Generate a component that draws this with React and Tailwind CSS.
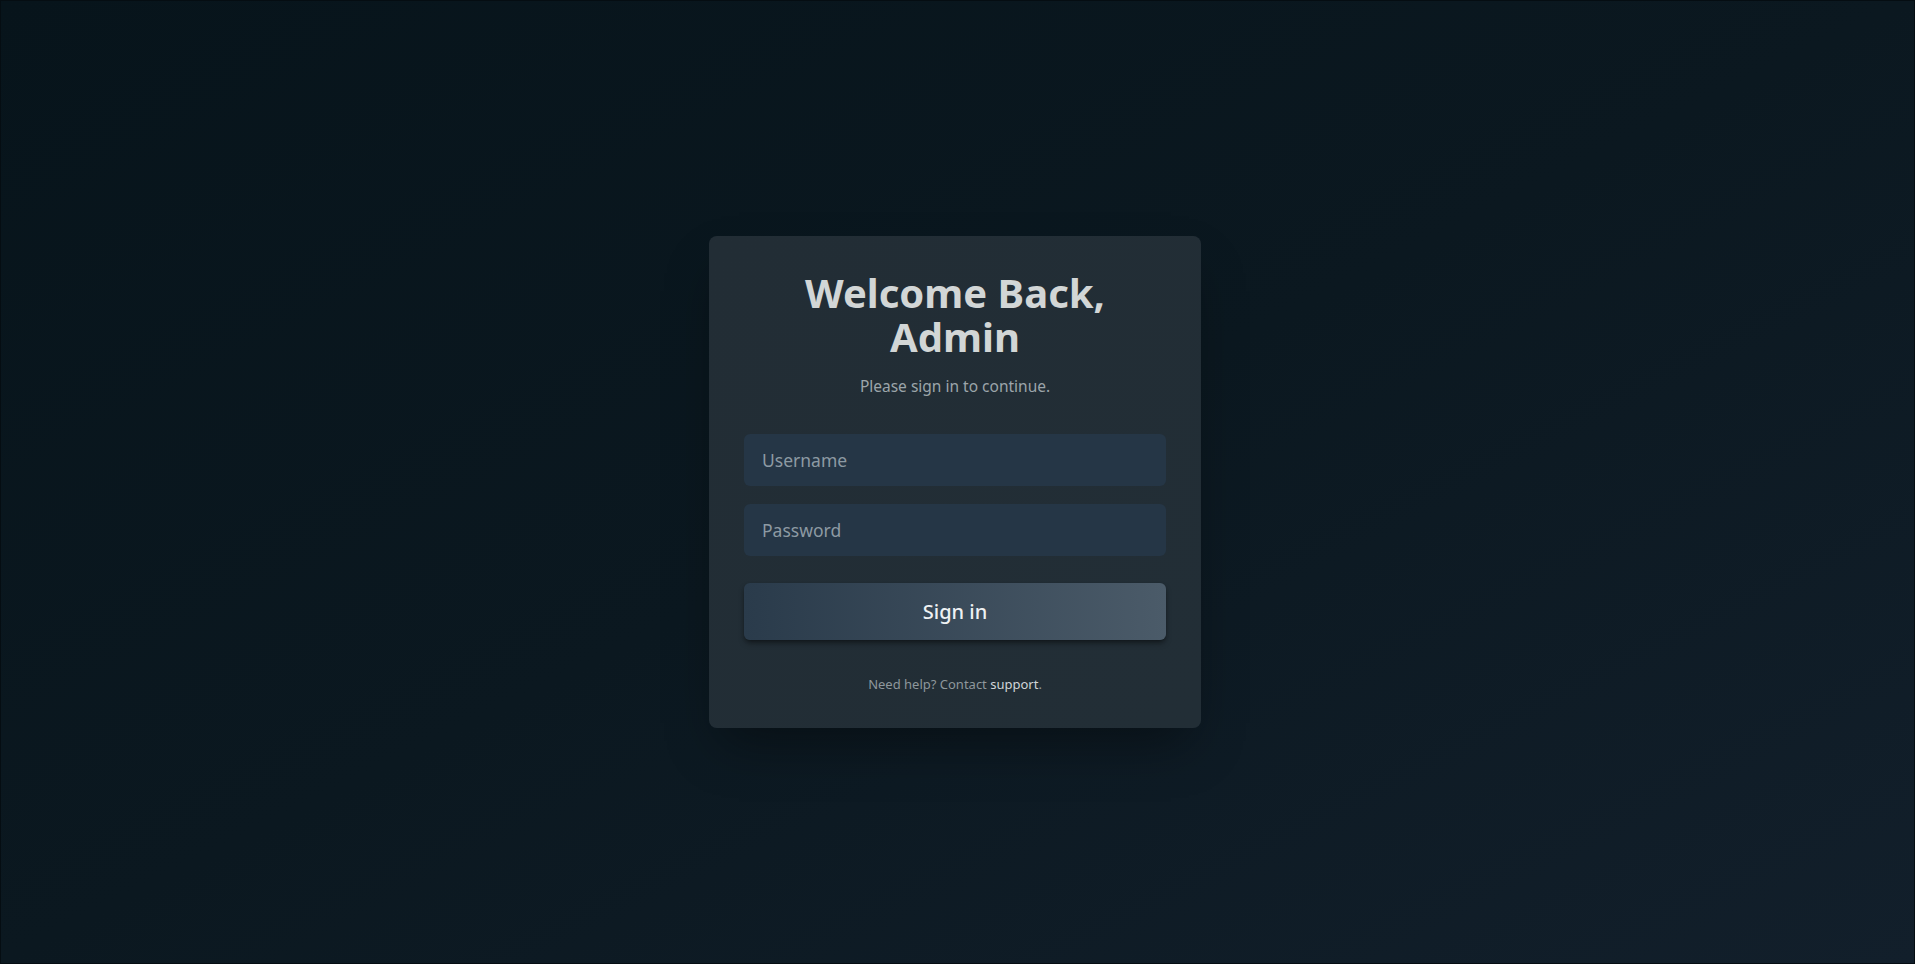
const App = () => {
  return (
    <main
      className="w-full h-screen flex items-center justify-center pr-[5px] border border-[#050d12] bg-gradient-to-br from-[#07141b] via-[#0b1820] to-[#121f2b]"
      style={{ fontFamily: '"Noto Sans", "Open Sans", sans-serif' }}
    >
      <section className="w-[492px] rounded-lg bg-gradient-to-br from-[#222d35] to-[#222e36] shadow-2xl shadow-black/40 px-[35px] pt-[35px] pb-[34px] text-center">
        <h1 className="text-[40px] leading-[1.1] font-bold text-[#d2d6d6]">
          Welcome Back,
          <br />
          Admin
        </h1>
        <p className="mt-[15px] text-[15.5px] leading-6 text-[#9ca5aa]">
          Please sign in to continue.
        </p>

        <form className="mt-[36px] flex flex-col" onSubmit={(e) => e.preventDefault()}>
          <input
            type="text"
            placeholder="Username"
            className="h-[52px] w-full rounded-md bg-[#253646] px-[18px] text-[17.5px] text-[#d2d6d6] placeholder:text-[#8d9aa3] outline-none"
          />
          <input
            type="password"
            placeholder="Password"
            className="mt-[18px] h-[52px] w-full rounded-md bg-[#253646] px-[18px] text-[17.5px] text-[#d2d6d6] placeholder:text-[#8d9aa3] outline-none"
          />
          <button
            type="submit"
            className="mt-[27px] h-[57px] w-full rounded-md bg-gradient-to-r from-[#2a3b4b] to-[#4b5b69] text-[20px] font-medium text-[#eef1f3] shadow-md shadow-black/40"
          >
            Sign in
          </button>
        </form>

        <p className="mt-[34px] text-[13px] leading-5 text-[#8e979c]">
          Need help? Contact <a href="#" className="text-[#d0d5d8]">support</a>.
        </p>
      </section>
    </main>
  );
};

export default App;
